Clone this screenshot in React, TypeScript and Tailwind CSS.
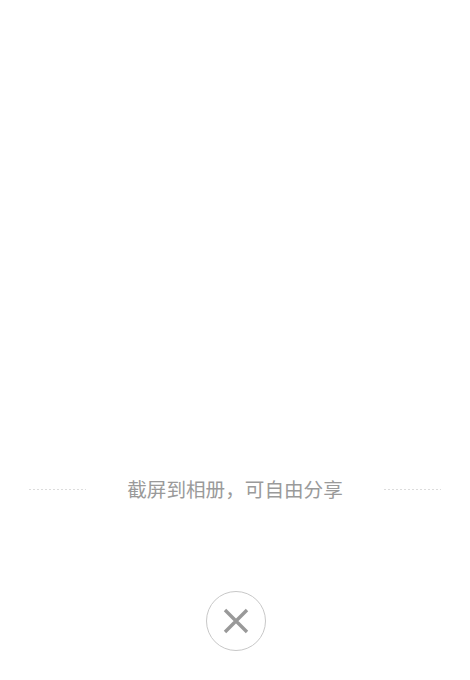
export default function App() {
  return (
    <div className="h-[680px] w-full bg-white flex flex-col items-center font-['Noto_Sans_CJK_SC','Noto_Sans',sans-serif]">
      {/* share hint row */}
      <div className="mt-[475px] flex items-center justify-center gap-[41px] h-[28px]">
        <div className="w-[57px] h-px bg-[repeating-linear-gradient(90deg,#dcdcdc_0_2px,transparent_2px_4px)]"></div>
        <span className="text-[19.6px] leading-[28px] text-[#9a9a9a] whitespace-nowrap">截屏到相册，可自由分享</span>
        <div className="w-[57px] h-px bg-[repeating-linear-gradient(90deg,#dcdcdc_0_2px,transparent_2px_4px)]"></div>
      </div>

      {/* close button */}
      <button className="mt-[88px] ml-[2px] w-[60px] h-[60px] rounded-full border border-[#c8c8c8] flex items-center justify-center">
        <svg width="26" height="26" viewBox="0 0 26 26" fill="none">
          <path d="M2 2L24 24M24 2L2 24" stroke="#999" strokeWidth="3.4" />
        </svg>
      </button>
    </div>
  );
}
